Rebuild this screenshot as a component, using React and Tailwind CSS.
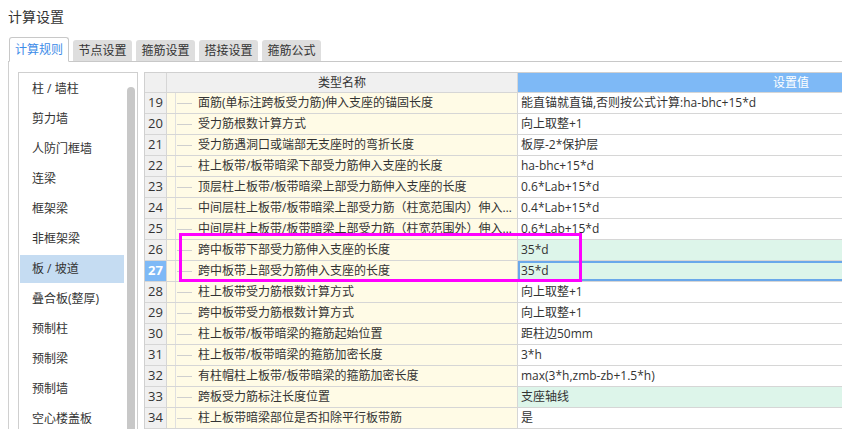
import React from "react";

const menu = ["柱 / 墙柱", "剪力墙", "人防门框墙", "连梁", "框架梁", "非框架梁", "板 / 坡道", "叠合板(整厚)", "预制柱", "预制梁", "预制墙", "空心楼盖板"];

const tabs = ["计算规则", "节点设置", "箍筋设置", "搭接设置", "箍筋公式"];

const rows = [
  [19, "面筋(单标注跨板受力筋)伸入支座的锚固长度", "能直锚就直锚,否则按公式计算:ha-bhc+15*d"],
  [20, "受力筋根数计算方式", "向上取整+1"],
  [21, "受力筋遇洞口或端部无支座时的弯折长度", "板厚-2*保护层"],
  [22, "柱上板带/板带暗梁下部受力筋伸入支座的长度", "ha-bhc+15*d"],
  [23, "顶层柱上板带/板带暗梁上部受力筋伸入支座的长度", "0.6*Lab+15*d"],
  [24, "中间层柱上板带/板带暗梁上部受力筋（柱宽范围内）伸入支座的长度", "0.4*Lab+15*d"],
  [25, "中间层柱上板带/板带暗梁上部受力筋（柱宽范围外）伸入支座的长度", "0.6*Lab+15*d"],
  [26, "跨中板带下部受力筋伸入支座的长度", "35*d", "green"],
  [27, "跨中板带上部受力筋伸入支座的长度", "35*d", "selected"],
  [28, "柱上板带受力筋根数计算方式", "向上取整+1"],
  [29, "跨中板带受力筋根数计算方式", "向上取整+1"],
  [30, "柱上板带/板带暗梁的箍筋起始位置", "距柱边50mm"],
  [31, "柱上板带/板带暗梁的箍筋加密长度", "3*h"],
  [32, "有柱帽柱上板带/板带暗梁的箍筋加密长度", "max(3*h,zmb-zb+1.5*h)"],
  [33, "跨板受力筋标注长度位置", "支座轴线", "green"],
  [34, "柱上板带暗梁部位是否扣除平行板带筋", "是"],
];

export default function App() {
  return (
    <div
      className="relative w-[842px] h-[429px] overflow-hidden bg-white text-[#333] flex flex-col"
      style={{ fontFamily: '"Open Sans", "Noto Sans CJK SC", sans-serif' }}
    >
      {/* title */}
      <div className="h-[37px] pl-[8px] pt-[7px] text-[14px] leading-[20px] shrink-0">计算设置</div>

      {/* tabs */}
      <div className="flex items-end h-[25px] ml-[8px] pl-px gap-[4px] border-b border-[#c8c8c8] shrink-0">
        {tabs.map((t, i) =>
          i === 0 ? (
            <div
              key={t}
              className="h-[25px] w-[60px] -mb-px flex items-center justify-center bg-white border border-[#c8c8c8] border-b-white rounded-t-[3px] text-[12px] text-[#3d8ce8]"
            >
              {t}
            </div>
          ) : (
            <div
              key={t}
              className="h-[21px] w-[59px] flex items-center justify-center bg-[#dedede] rounded-t-[3px] text-[12px]"
            >
              {t}
            </div>
          )
        )}
      </div>

      {/* pane */}
      <div className="flex flex-1 min-h-0 ml-[8px] border-l border-[#d0d0d0] pt-[10px]">
        {/* left list */}
        <div className="ml-[9px] w-[120px] shrink-0 flex border border-b-0 border-[#cfcfcf]">
          <div className="flex-1 pt-px">
            {menu.map((m, i) => (
              <div key={m} className="h-[30px] py-px">
                <div
                  className={
                    "h-full mx-px pl-[12px] flex items-center text-[12px] " +
                    (i === 6 ? "bg-[#c5dcf2]" : "")
                  }
                >
                  {m}
                </div>
              </div>
            ))}
          </div>
          <div className="w-[12px] pt-[14px] px-[2px] flex">
            <div className="w-[8px] bg-[#c8c8c8] rounded-t-full" />
          </div>
        </div>

        {/* table */}
        <div className="ml-[6px] flex-1 min-w-0 overflow-hidden border-l border-t border-[#d0d0d0] text-[12px]">
          <div className="flex h-[20px] border-b border-[#d6d6d6] w-max">
            <div className="w-[22px] shrink-0 bg-[#f0f0f0] border-r border-[#d6d6d6]" />
            <div className="w-[351px] shrink-0 bg-[#f0f0f0] border-r border-[#d6d6d6] flex items-center justify-center">
              类型名称
            </div>
            <div className="w-[546px] shrink-0 bg-[#7eb9f6] text-white flex items-center justify-center">
              设置值
            </div>
          </div>
          {rows.map(([n, name, val, kind]) => (
            <div key={n} className="flex h-[21px] border-b border-[#d6d6d6] w-max">
              <div
                className={
                  "w-[22px] shrink-0 border-r border-[#d6d6d6] flex items-center justify-center text-[13px] " +
                  (kind === "selected" ? "bg-[#7eb9f6] text-white font-bold" : "bg-[#f0f0f0]")
                }
              >
                {n}
              </div>
              <div className="w-[351px] shrink-0 bg-[#fffbe6] border-r border-[#d6d6d6] flex items-stretch">
                <div className="w-[8px] shrink-0" />
                <div className="w-px shrink-0 bg-[#e0e0e0]" />
                <div className="w-[22px] shrink-0 flex items-center">
                  <div className="ml-px w-[15px] h-px bg-[#cfcfcf]" />
                </div>
                <div className="flex-1 min-w-0 pr-px truncate leading-[20px]">{name}</div>
              </div>
              <div
                className={
                  "w-[546px] shrink-0 pl-[3px] flex items-center " +
                  (kind === "green" ? "bg-[#ddf5ea] " : "") +
                  (kind === "selected" ? "bg-[#ddf5ea] shadow-[inset_0_0_0_2px_#6aa8ea]" : "")
                }
              >
                {val}
              </div>
            </div>
          ))}
        </div>
      </div>

      {/* annotation box */}
      <div className="absolute left-[179px] top-[233px] w-[403px] h-[49px] border-[3px] border-[#ff00ff]" />
    </div>
  );
}
